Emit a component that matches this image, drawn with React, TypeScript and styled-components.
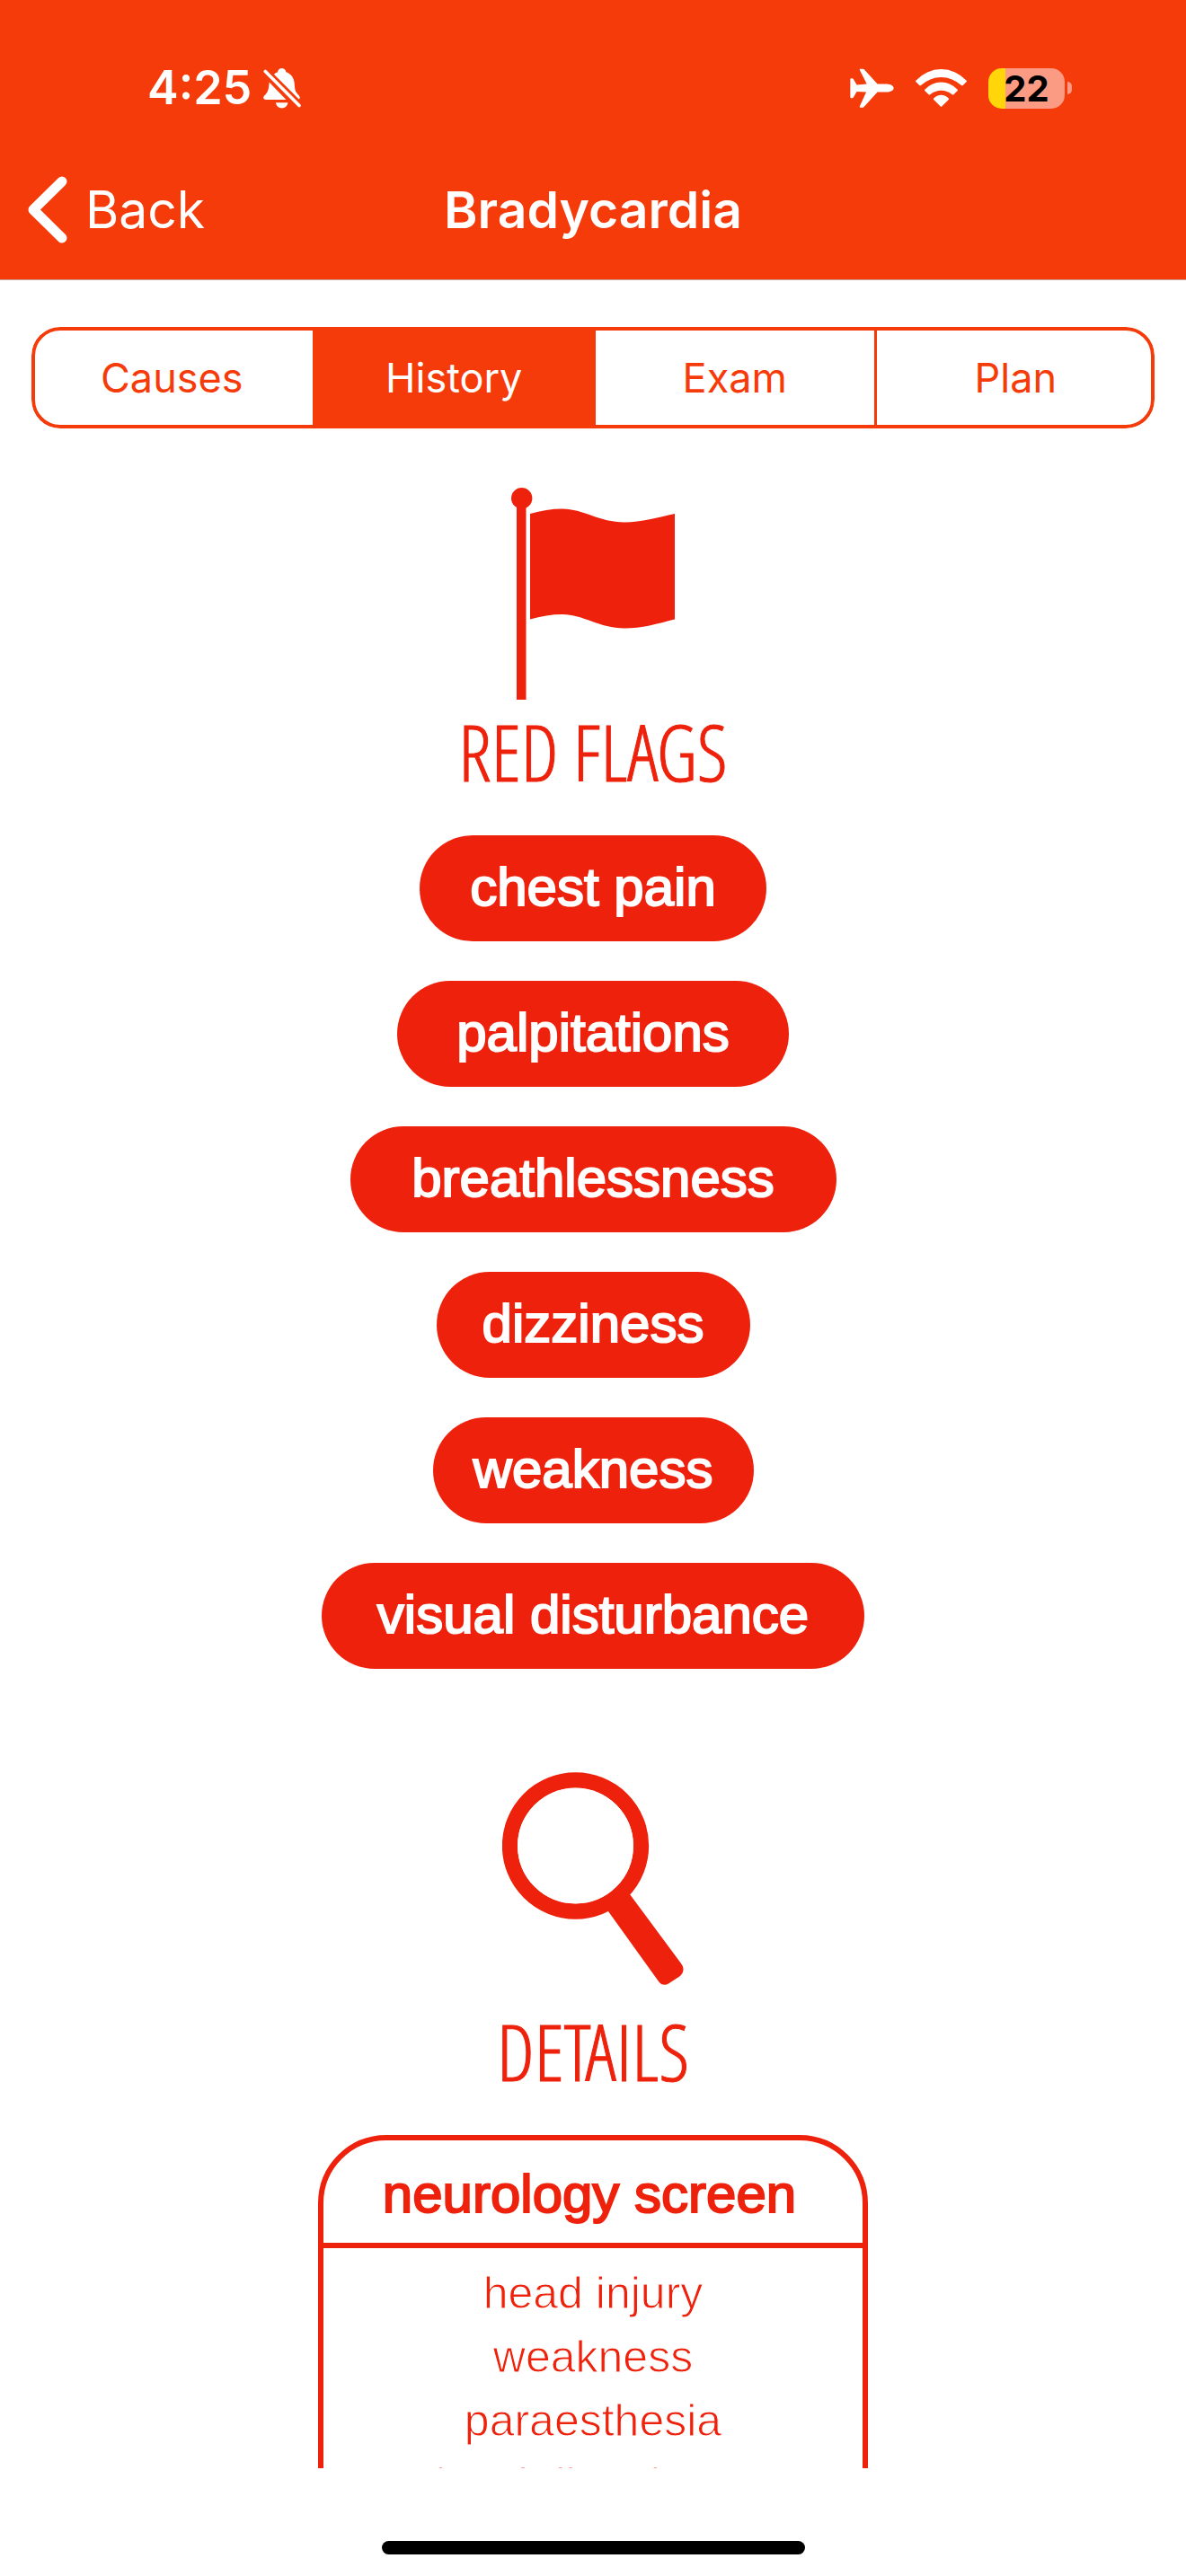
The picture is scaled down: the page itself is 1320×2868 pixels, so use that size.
import React, { useState } from "react";
import styled, { createGlobalStyle } from "styled-components";

const ORANGE = "#f63b0a";
const RED = "#ee220c";
const HELVETICA = `"Helvetica Neue", "Liberation Sans", Arial, sans-serif`;
const SYSTEM = `Inter, "Liberation Sans", sans-serif`;

const GlobalStyle = createGlobalStyle`
  * { box-sizing: border-box; }
  body { margin: 0; background: #fff; }
  button { font: inherit; color: inherit; background: none; border: 0; padding: 0; cursor: pointer; }
  h1, h2, h3, ul { margin: 0; padding: 0; }
  svg { display: block; flex: none; }
`;

const Screen = styled.div`
  display: flex;
  flex-direction: column;
  height: 100vh;
  font-family: ${SYSTEM};
`;

const Header = styled.header`
  flex: none;
  background: ${ORANGE};
  color: #fff;
  border-bottom: 1px solid #c4a69d;
`;

const StatusBar = styled.div`
  display: flex;
  align-items: center;
  justify-content: space-between;
  height: 156px;
  padding: 40px 127px 0 164px;
`;

const StatusGroup = styled.div<{ $gap: number }>`
  display: flex;
  align-items: center;
  gap: ${({ $gap }) => $gap}px;
`;

const Clock = styled.span`
  font-size: 52px;
  line-height: 64px;
  font-weight: 600;
`;

const Battery = styled.div`
  display: flex;
  align-items: center;
  gap: 3px;
`;

const BatteryBody = styled.div<{ $level: number }>`
  width: 85px;
  height: 45px;
  border-radius: 15px;
  background: linear-gradient(
    to right,
    #ffd60a ${({ $level }) => $level}%,
    #fc9b84 ${({ $level }) => $level}%
  );
  color: #000;
  font-size: 40px;
  line-height: 45px;
  font-weight: 700;
  text-align: center;
`;

const BatteryTip = styled.div`
  width: 5px;
  height: 14px;
  border-radius: 0 5px 5px 0;
  background: #fc9b84;
`;

const NavBar = styled.nav`
  display: grid;
  grid-template-columns: 1fr auto 1fr;
  align-items: center;
  height: 155px;
  padding: 0 31px;
`;

const BackButton = styled.button`
  display: flex;
  align-items: center;
  justify-self: start;
  gap: 20px;
  font-size: 57px;
  line-height: 76px;
`;

const Title = styled.h1`
  font-size: 57px;
  line-height: 76px;
  font-weight: 600;
`;

const Tabs = styled.div`
  position: relative;
  flex: none;
  display: grid;
  grid-auto-flow: column;
  grid-auto-columns: 1fr;
  height: 113px;
  margin: 52px 35px 0;
  border-radius: 32px;
  overflow: hidden;

  &::after {
    content: "";
    position: absolute;
    inset: 0;
    border: 4px solid ${ORANGE};
    border-radius: 32px;
    pointer-events: none;
  }
`;

const Tab = styled.button<{ $active: boolean }>`
  font-size: 45px;
  line-height: 56px;
  color: ${({ $active }) => ($active ? "#fff" : ORANGE)};
  background: ${({ $active }) => ($active ? ORANGE : "#fff")};

  & + & {
    border-left: 3px solid ${ORANGE};
  }
`;

const Content = styled.main`
  flex: 1;
  min-height: 0;
  overflow-y: auto;
  scrollbar-width: none;
  color: ${RED};
`;

const Section = styled.section<{ $top: number }>`
  display: flex;
  flex-direction: column;
  align-items: center;
  padding-top: ${({ $top }) => $top}px;
`;

const Heading = styled.h2<{ $top: number }>`
  margin: ${({ $top }) => $top}px 0 51px;
  font-family: "Avenir Next Condensed", "Open Sans Condensed Light", "Open Sans", sans-serif;
  font-size: 86px;
  line-height: 84px;
  font-weight: 300;
  -webkit-text-stroke: 1px ${RED};
`;

const Pills = styled.ul`
  display: flex;
  flex-direction: column;
  align-items: center;
  gap: 44px;
  list-style: none;
`;

const Pill = styled.li<{ $width: number }>`
  width: ${({ $width }) => $width}px;
  height: 118px;
  border-radius: 59px;
  background: ${RED};
  color: #fff;
  font-family: ${HELVETICA};
  font-size: 60px;
  line-height: 116px;
  text-align: center;
  white-space: nowrap;
  -webkit-text-stroke: 2px #fff;
`;

const Card = styled.article`
  width: 612px;
  border: 6px solid ${RED};
  border-radius: 76px;
  font-family: ${HELVETICA};
  text-align: center;
`;

const CardTitle = styled.h3`
  height: 120px;
  padding: 6px 8px 0 0;
  border-bottom: 6px solid ${RED};
  font-size: 60px;
  line-height: 108px;
  font-weight: 400;
  -webkit-text-stroke: 2px ${RED};
`;

const CardList = styled.ul`
  padding: 15px 0 60px;
  list-style: none;
  font-size: 50px;
  line-height: 71px;
  -webkit-text-stroke: 1px #fff;
`;

const Footer = styled.footer`
  flex: none;
  display: flex;
  justify-content: center;
  height: 120px;
  padding-top: 81px;
`;

const HomeIndicator = styled.div`
  width: 471px;
  height: 15px;
  border-radius: 8px;
  background: #000;
`;

const BellOffIcon = () => (
  <svg width="42" height="46" viewBox="38 44 127 138" fill="#fff" aria-label="Silent">
    <path d="M58 93L115 152H47C38 152 36 144 42 138C53 128 57 118 58 93Z" />
    <path d="M74 67C78 63 82 61 86 60C89 42 111 42 115 59C132 64 142 80 143 98C144 120 146 126 157 137C163 143 162 149 158 151Z" />
    <path d="M80 162H121C117 187 84 187 80 162Z" />
    <path d="M45 57L159 172" stroke="#fff" strokeWidth="11" strokeLinecap="round" />
  </svg>
);

const PlaneIcon = () => (
  <svg width="49" height="44" viewBox="200 107 149 134" fill="#fff" aria-label="Airplane mode">
    <path d="M201 144Q201 141 204 141H207Q210 141 212 144L223 163L257 160L233 113Q231 109 235 109H243Q246 109 248 111L293 160H325C340 161 348 167 348 174S340 187 325 188H293L248 237Q246 240 243 240H235Q231 240 233 236L255 188L223 186L212 205Q210 208 207 208H204Q201 208 201 205Z" />
  </svg>
);

const WifiIcon = () => (
  <svg width="57" height="42" viewBox="419 105 172 126" fill="#fff" aria-label="Wi-Fi">
    <path d="M420 143A114 114 0 0 1 590 143Q592 145 590 147L578 159Q576 161 573 159A99 99 0 0 0 437 159Q435 161 432 159L420 147Q418 145 420 143Z" />
    <path d="M450 173A74 74 0 0 1 560 173Q562 175 560 177L547 190Q545 192 542 190A57 57 0 0 0 468 190Q466 192 463 190L450 177Q448 175 450 173Z" />
    <path d="M480 203A33 33 0 0 1 530 203Q532 205 530 207L507 230Q505 232 503 230L480 207Q478 205 480 203Z" />
  </svg>
);

const ChevronIcon = () => (
  <svg width="44" height="75" viewBox="0 0 44 75" fill="none" aria-hidden="true">
    <path d="M38 6L6 37.500L38 69" stroke="#fff" strokeWidth="11" strokeLinecap="round" strokeLinejoin="round" />
  </svg>
);

const FlagIcon = () => (
  <svg width="182" height="236" viewBox="0 0 182 236" fill={RED} aria-hidden="true">
    <circle cx="11.700" cy="11.700" r="11.700" />
    <path d="M6 15H16.500V236H6Z" />
    <path d="M21 29C33 25.500 45 23.500 57 23.500C80 23.500 98 38.500 126 38.500C145 38.500 163 33 182 29V146.500C163 151.500 145 156.500 126 156.500C98 156.500 80 141 57 141C45 141 33 143 21 146.500Z" />
  </svg>
);

const MagnifierIcon = () => (
  <svg width="202" height="237" viewBox="0 0 202 237" aria-hidden="true">
    <circle cx="81.500" cy="82" r="73" fill="none" stroke={RED} strokeWidth="17.300" />
    <path
      fill={RED}
      d="M142 136L199 213C203 218 202 223 198 227L185 235.500C181 238 177 237 174 233L118 155L112 142L130 128Z"
    />
    <circle cx="81.500" cy="82" r="64.500" fill="#fff" />
  </svg>
);

const TABS = ["Causes", "History", "Exam", "Plan"];

const RED_FLAGS = [
  { label: "chest pain", width: 386 },
  { label: "palpitations", width: 436 },
  { label: "breathlessness", width: 541 },
  { label: "dizziness", width: 349 },
  { label: "weakness", width: 357 },
  { label: "visual disturbance", width: 604 },
];

const NEUROLOGY = ["head injury", "weakness", "paraesthesia", "visual disturbance"];

export default function App() {
  const [active, setActive] = useState("History");

  return (
    <Screen>
      <GlobalStyle />
      <Header>
        <StatusBar>
          <StatusGroup $gap={13}>
            <Clock>4:25</Clock>
            <BellOffIcon />
          </StatusGroup>
          <StatusGroup $gap={24}>
            <PlaneIcon />
            <WifiIcon />
            <Battery>
              <BatteryBody $level={22}>22</BatteryBody>
              <BatteryTip />
            </Battery>
          </StatusGroup>
        </StatusBar>
        <NavBar>
          <BackButton type="button">
            <ChevronIcon />
            Back
          </BackButton>
          <Title>Bradycardia</Title>
        </NavBar>
      </Header>

      <Tabs role="tablist">
        {TABS.map((tab) => (
          <Tab
            key={tab}
            type="button"
            role="tab"
            aria-selected={tab === active}
            $active={tab === active}
            onClick={() => setActive(tab)}
          >
            {tab}
          </Tab>
        ))}
      </Tabs>

      <Content>
        <Section $top={66}>
          <FlagIcon />
          <Heading $top={16}>RED FLAGS</Heading>
          <Pills>
            {RED_FLAGS.map(({ label, width }) => (
              <Pill key={label} $width={width}>
                {label}
              </Pill>
            ))}
          </Pills>
        </Section>

        <Section $top={115}>
          <MagnifierIcon />
          <Heading $top={32}>DETAILS</Heading>
          <Card>
            <CardTitle>neurology screen</CardTitle>
            <CardList>
              {NEUROLOGY.map((item) => (
                <li key={item}>{item}</li>
              ))}
            </CardList>
          </Card>
        </Section>
      </Content>

      <Footer>
        <HomeIndicator />
      </Footer>
    </Screen>
  );
}
